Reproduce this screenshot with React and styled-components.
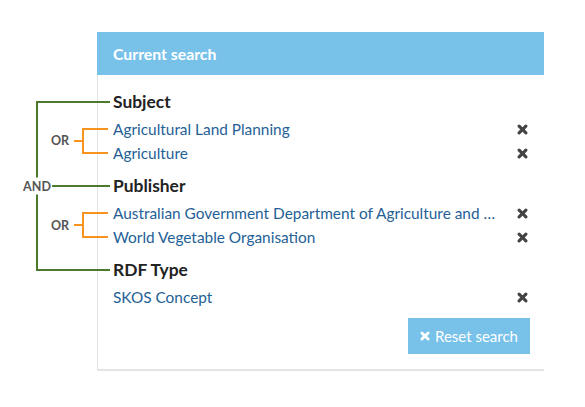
import React from "react";
import styled, { createGlobalStyle } from "styled-components";

const Global = createGlobalStyle`
  html, body { margin: 0; padding: 0; background: #fff; }
  body { font-family: "Lato", "Open Sans", sans-serif; }
`;

const GREEN = "#4b7a2a";
const ORANGE = "#f7931e";

const Page = styled.div`
  position: relative;
  width: 585px;
  height: 407px;
  padding: 32px 0 0 97px;
  box-sizing: border-box;
`;

const Panel = styled.section`
  width: 447px;
  border-left: 1px solid #e2e2e2;
  border-bottom: 2px solid #e4e4e4;
  box-sizing: border-box;
  padding-bottom: 15px;
`;

const Header = styled.header`
  height: 43px;
  margin-left: -1px;
  background: #78c2ea;
  color: #fff;
  font-weight: 700;
  font-size: 15.8px;
  display: flex;
  align-items: center;
  padding-left: 16px;
`;

const Body = styled.div`
  padding: 14px 15px 0 15px;
  display: flex;
  flex-direction: column;
  gap: 8px;
`;

const Group = styled.div`
  display: flex;
  flex-direction: column;
`;

const Heading = styled.h3`
  margin: 0 0 2px 0;
  height: 26px;
  line-height: 25px;
  font-size: 17.4px;
  font-weight: 700;
  color: #222;
`;

const Row = styled.div`
  height: 24px;
  display: flex;
  align-items: center;
  justify-content: space-between;
`;

const Link = styled.a`
  font-size: 15.4px;
  line-height: 22px;
  color: #255f96;
  text-decoration: none;
  white-space: nowrap;
`;

const Remove = styled.button`
  border: 0;
  background: none;
  padding: 0;
  margin-right: 1px;
  color: #444;
  display: flex;
  align-items: center;
  cursor: pointer;
`;

const Footer = styled.div`
  display: flex;
  justify-content: flex-end;
  margin-top: 1px;
`;

const ResetButton = styled.button`
  height: 36px;
  width: 122px;
  border: 0;
  background: #78c2ea;
  color: #fff;
  font-family: inherit;
  font-size: 15px;
  display: flex;
  align-items: center;
  justify-content: center;
  gap: 5px;
  padding: 0;
  margin-right: -1px;
`;

const Connectors = styled.svg`
  position: absolute;
  left: 0;
  top: 0;
  pointer-events: none;
`;

const OpLabel = styled.span`
  position: absolute;
  left: ${(p) => p.$x}px;
  top: ${(p) => p.$y}px;
  transform: translate(-50%, -50%);
  background: #fff;
  color: #555;
  font-size: 12.5px;
  font-weight: 700;
  padding: 2px 1px;
  line-height: 13px;
`;

function Cross({ size = 11 }) {
  return (
    <svg width={size} height={size} viewBox="0 0 12 12" aria-hidden="true">
      <g stroke="currentColor" strokeWidth="3.4" strokeLinecap="round">
        <path d="M2.3 2.3 L9.7 9.7" />
        <path d="M9.7 2.3 L2.3 9.7" />
      </g>
    </svg>
  );
}

const groups = [
  { title: "Subject", items: ["Agricultural Land Planning", "Agriculture"] },
  {
    title: "Publisher",
    items: [
      "Australian Government Department of Agriculture and …",
      "World Vegetable Organisation",
    ],
  },
  { title: "RDF Type", items: ["SKOS Concept"] },
];

function OrBracket({ top, bottom }) {
  const mid = (top + bottom) / 2;
  return (
    <g stroke={ORANGE} strokeWidth="2" fill="none">
      <path d={`M108 ${top} H83 V${bottom} H108`} />
      <path d={`M74 ${mid} H83`} />
    </g>
  );
}

export default function App() {
  return (
    <>
      <Global />
      <Page>
        <Panel>
          <Header>Current search</Header>
          <Body>
            {groups.map((g) => (
              <Group key={g.title}>
                <Heading>{g.title}</Heading>
                {g.items.map((it) => (
                  <Row key={it}>
                    <Link href="#">{it}</Link>
                    <Remove aria-label="remove">
                      <Cross />
                    </Remove>
                  </Row>
                ))}
              </Group>
            ))}
            <Footer>
              <ResetButton>
                <Cross size={10} />
                Reset search
              </ResetButton>
            </Footer>
          </Body>
        </Panel>
        <Connectors width="120" height="300" viewBox="0 0 120 300">
          <g stroke={GREEN} strokeWidth="2" fill="none">
            <path d="M110 102 H37 V270 H110" />
            <path d="M51 186 H110" />
          </g>
          <OrBracket top={129} bottom={153} />
          <OrBracket top={213} bottom={237} />
        </Connectors>
        <OpLabel $x={37} $y={186}>AND</OpLabel>
        <OpLabel $x={60} $y={140}>OR</OpLabel>
        <OpLabel $x={60} $y={225}>OR</OpLabel>
      </Page>
    </>
  );
}
